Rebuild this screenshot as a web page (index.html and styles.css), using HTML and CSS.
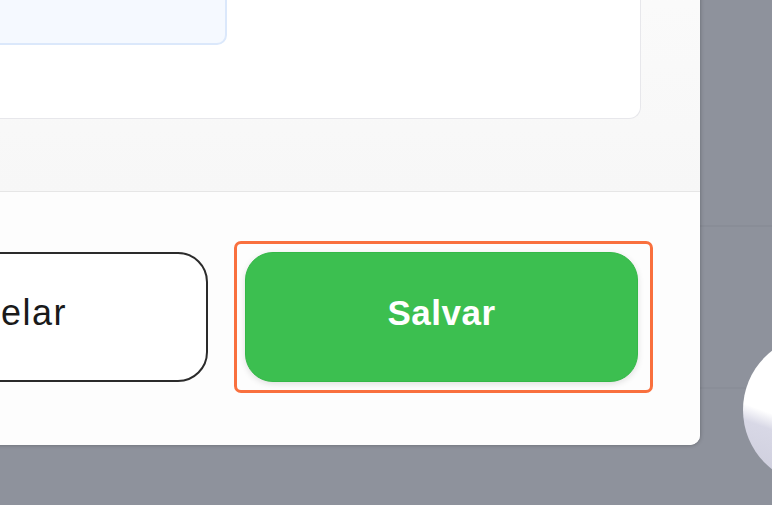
FILE: index.html
```html
<!DOCTYPE html>
<html lang="pt">
<head>
    <meta charset="UTF-8">
    <meta name="viewport" content="width=device-width, initial-scale=1.0">
    <title>Editar</title>
    <link rel="stylesheet" href="styles.css">
</head>
<body>
    <div class="modal">
        <div class="modal-body">
            <div class="card">
                <div class="info-box"></div>
            </div>
        </div>
        <footer class="modal-footer">
            <button class="btn btn-cancel">Cancelar</button>
            <span class="focus-ring">
                <button class="btn btn-save">Salvar</button>
            </span>
        </footer>
    </div>
    <div class="avatar"></div>
</body>
</html>
```

FILE: styles.css
```css
body {
    font-family: "Liberation Sans", Arial, sans-serif;
    margin: 0;
    padding: 0;
    height: 505px;
    overflow: hidden;
    display: flex;
    align-items: flex-start;
    background: linear-gradient(to bottom,
        #8e929c 0, #8e929c 225px,
        #898d97 225px, #898d97 227px,
        #8e929c 227px, #8e929c 387px,
        #8a8e98 387px, #8a8e98 389px,
        #8e929c 389px);
}
.modal {
    flex: none;
    width: 1000px;
    margin-left: -300px;
    margin-top: -59px;
    background-color: #fafafa;
    border-bottom-right-radius: 10px;
    box-shadow: 0 0 4px rgba(0, 0, 0, 0.3);
    overflow: hidden;
}
.modal-body {
    padding: 0 59px 72px 40px;
    background: linear-gradient(to bottom, #fbfbfb, #f7f7f7);
}
.card {
    background-color: #fff;
    border: 1px solid #e7e7eb;
    border-top: none;
    border-bottom-right-radius: 12px;
    padding: 20px 20px 73px 20px;
}
.info-box {
    width: 462px;
    height: 80px;
    background-color: #f5f9ff;
    border: 2px solid #dbe8fb;
    border-radius: 10px;
}
.modal-footer {
    display: flex;
    justify-content: flex-end;
    align-items: center;
    gap: 26px;
    padding: 49px 47px 52px 0;
    border-top: 1px solid #e6e6e6;
    background-color: #fdfdfd;
}
.btn {
    height: 130px;
    font-family: "Liberation Sans", Arial, sans-serif;
    font-size: 35px;
    padding: 0 0 8px 0;
    cursor: pointer;
}
.btn-cancel {
    width: 438px;
    background-color: #fff;
    color: #1a1a1a;
    font-size: 36px;
    letter-spacing: 1.5px;
    border: 2px solid #2b2b2b;
    border-radius: 30px;
}
.focus-ring {
    display: flex;
    padding: 8px 12px 8px 8px;
    border: 3px solid #f9703e;
    border-radius: 7px;
}
.btn-save {
    width: 393px;
    background-color: #3cbf50;
    color: #fff;
    font-weight: bold;
    letter-spacing: 0.5px;
    border: 1px solid #34b848;
    border-radius: 28px;
    box-shadow: 0 2px 6px rgba(0, 0, 0, 0.12);
}
.avatar {
    flex: none;
    width: 150px;
    height: 150px;
    margin-left: 43px;
    margin-top: 335px;
    border-radius: 50%;
    background: linear-gradient(200deg, #fff 0, #fff 60%, #d8d8e6 68%, #cbcbda 100%);
}
```
